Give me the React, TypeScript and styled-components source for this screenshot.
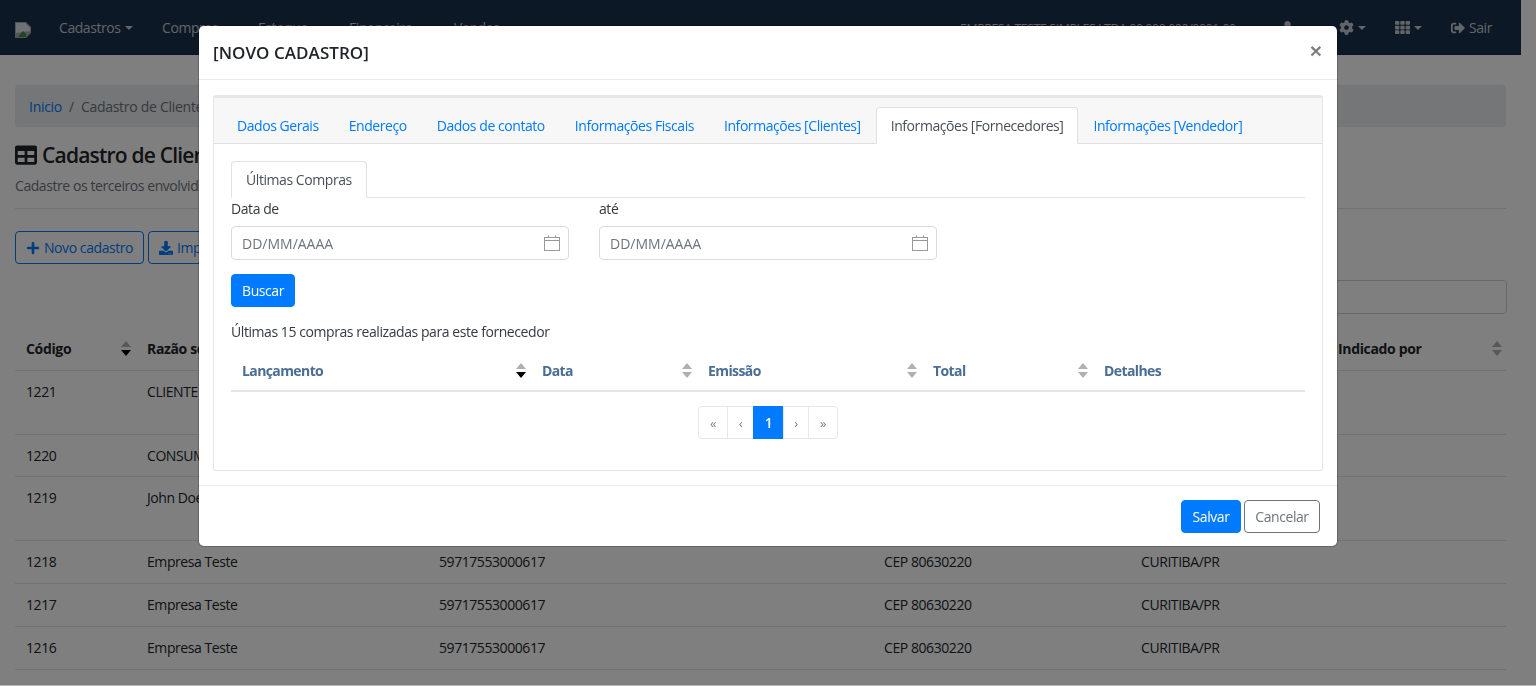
import React from "react";
import styled, { createGlobalStyle } from "styled-components";
import { FaCog, FaDownload, FaPlus, FaSignOutAlt, FaTable, FaTh, FaUser } from "react-icons/fa";

const GlobalStyle = createGlobalStyle`
html, body {
  margin: 0;
  height: 100%;
  overflow: hidden;
  background: #fff;
}
body {
  font-family: "Open Sans", "Liberation Sans", sans-serif;
  font-size: 14px;
  letter-spacing: -0.43px;
  color: #212529;
}
* {
  box-sizing: border-box;
}
`;

const navItems = [
  { label: "Cadastros", width: 103 },
  { label: "Compras", width: 96 },
  { label: "Estoque", width: 91 },
  { label: "Financeiro", width: 105 },
  { label: "Vendas", width: 80 },
];

const mainTabs = [
  { label: "Dados Gerais" },
  { label: "Endereço" },
  { label: "Dados de contato" },
  { label: "Informações Fiscais" },
  { label: "Informações [Clientes]" },
  { label: "Informações [Fornecedores]", active: true },
  { label: "Informações [Vendedor]" },
];

const rows = [
  { code: "1221", name: "CLIENTE", doc: "", cep: "", city: "", height: 64 },
  { code: "1220", name: "CONSUMIDOR", doc: "", cep: "", city: "", height: 42 },
  { code: "1219", name: "John Doe", doc: "", cep: "", city: "", height: 64 },
  { code: "1218", name: "Empresa Teste", doc: "59717553000617", cep: "CEP 80630220", city: "CURITIBA/PR", height: 43 },
  { code: "1217", name: "Empresa Teste", doc: "59717553000617", cep: "CEP 80630220", city: "CURITIBA/PR", height: 43 },
  { code: "1216", name: "Empresa Teste", doc: "59717553000617", cep: "CEP 80630220", city: "CURITIBA/PR", height: 43 },
];

const purchaseColumns = [
  { label: "Lançamento", active: true },
  { label: "Data" },
  { label: "Emissão" },
  { label: "Total" },
  { label: "Detalhes", plain: true },
];

const pages = [
  { label: "«", width: 30 },
  { label: "‹", width: 27 },
  { label: "1", width: 31, active: true },
  { label: "›", width: 26 },
  { label: "»", width: 30 },
];

function SortIcon({ up, down }: { up: string; down: string }) {
  return (
    <svg width="10" height="15" viewBox="0 0 10 15">
      <path d="M5 0 L10 6 H0 Z" fill={up} />
      <path d="M5 15 L0 9 H10 Z" fill={down} />
    </svg>
  );
}

function CalendarIcon() {
  return (
    <svg width="16" height="16" viewBox="0 0 16 16" fill="none" stroke="#999" strokeWidth="1">
      <rect x="0.5" y="2.5" width="15" height="13" />
      <path d="M0.5 5.5 H15.5 M4.5 0.5 V3 M11.5 0.5 V3" />
    </svg>
  );
}

function BrokenImage() {
  return (
    <svg width="16" height="16" viewBox="0 0 16 16">
      <path d="M0 0 H11 L16 5 V11 L11 16 H0 Z" fill="#a3abb3" />
      <path d="M1 1 H10 L15 6 V9 L1 11 Z" fill="#dfe4e8" />
      <path d="M3 15 L8 9 L11 12 L11 15 Z" fill="#3d8a3a" />
    </svg>
  );
}

export default function App() {
  return (
    <>
      <GlobalStyle />
      <Page>
        <Navbar>
          <Logo>
            <BrokenImage />
          </Logo>
          <NavMenu>
            {navItems.map((item) => (
              <NavLink key={item.label} $width={item.width}>
                {item.label}
                <Caret />
              </NavLink>
            ))}
          </NavMenu>
          <NavRight>
            <CompanyName>
              EMPRESA TESTE SIMPLES LTDA 00.000.000/0001-00
              <Caret />
            </CompanyName>
            <NavIcon $width={58}>
              <FaUser size={13} />
              <Caret />
            </NavIcon>
            <NavIcon $width={56}>
              <FaCog size={15} />
              <Caret />
            </NavIcon>
            <NavIcon $width={56}>
              <FaTh size={15} />
              <Caret />
            </NavIcon>
            <SignOut>
              <FaSignOutAlt size={14} />
              Sair
            </SignOut>
          </NavRight>
        </Navbar>
        <Content>
          <Breadcrumb>
            <a href="#">Inicio</a>
            <span>/</span>
            <span>Cadastro de Clientes</span>
          </Breadcrumb>
          <PageTitle>
            <FaTable size={22} />
            Cadastro de Clientes
          </PageTitle>
          <PageSubtitle>Cadastre os terceiros envolvidos</PageSubtitle>
          <Divider />
          <Actions>
            <OutlineButton $width={129}>
              <FaPlus size={14} />
              Novo cadastro
            </OutlineButton>
            <OutlineButton $width={110}>
              <FaDownload size={14} />
              Importar
            </OutlineButton>
          </Actions>
          <SearchRow>
            <SearchInput />
          </SearchRow>
          <RecordsHead>
            <HeadCell>
              Código
              <SortIcon up="#b0b0b0" down="#000" />
            </HeadCell>
            <HeadCell>Razão social</HeadCell>
            <HeadCell />
            <HeadCell />
            <HeadCell />
            <HeadCell>
              Indicado por
              <SortIcon up="#b0b0b0" down="#b0b0b0" />
            </HeadCell>
          </RecordsHead>
          {rows.map((row) => (
            <RecordRow key={row.code} $height={row.height}>
              <span>{row.code}</span>
              <span>{row.name}</span>
              <span>{row.doc}</span>
              <span>{row.cep}</span>
              <span>{row.city}</span>
              <span />
            </RecordRow>
          ))}
        </Content>
      </Page>

      <Backdrop />
      <Modal>
        <ModalHeader>
          <ModalTitle>[NOVO CADASTRO]</ModalTitle>
          <CloseButton>×</CloseButton>
        </ModalHeader>
        <ModalBody>
          <Card>
            <CardTabs>
              {mainTabs.map((tab) => (
                <MainTab key={tab.label} $active={tab.active}>
                  {tab.label}
                </MainTab>
              ))}
            </CardTabs>
            <CardBody>
              <SubTabs>
                <SubTab>Últimas Compras</SubTab>
              </SubTabs>
              <DateRow>
                <DateField>
                  <FieldLabel>Data de</FieldLabel>
                  <DateInput>
                    DD/MM/AAAA
                    <CalendarIcon />
                  </DateInput>
                </DateField>
                <DateField>
                  <FieldLabel>até</FieldLabel>
                  <DateInput>
                    DD/MM/AAAA
                    <CalendarIcon />
                  </DateInput>
                </DateField>
              </DateRow>
              <SearchButton>Buscar</SearchButton>
              <Hint>Últimas 15 compras realizadas para este fornecedor</Hint>
              <PurchasesHead>
                {purchaseColumns.map((col) => (
                  <PurchaseCell key={col.label}>
                    {col.label}
                    {!col.plain && (
                      <SortIcon up="#b0b0b0" down={col.active ? "#000" : "#b0b0b0"} />
                    )}
                  </PurchaseCell>
                ))}
              </PurchasesHead>
              <Pagination>
                {pages.map((page) => (
                  <PageItem key={page.label} $width={page.width} $active={page.active}>
                    {page.label}
                  </PageItem>
                ))}
              </Pagination>
            </CardBody>
          </Card>
        </ModalBody>
        <ModalFooter>
          <PrimaryButton>Salvar</PrimaryButton>
          <CancelButton>Cancelar</CancelButton>
        </ModalFooter>
      </Modal>
    </>
  );
}

const Page = styled.div`
width: 1521px;
`;

const Navbar = styled.nav`
height: 55px;
background: #18304a;
display: flex;
align-items: center;
color: rgba(255, 255, 255, .75);
`;

const Logo = styled.div`
width: 44px;
margin-left: 15px;
padding-top: 5px;
display: flex;
`;

const NavMenu = styled.div`
display: flex;
`;

const NavLink = styled.a<{ $width: number }>`
width: ${(p) => p.$width}px;
display: flex;
align-items: center;
`;

const Caret = styled.i`
display: inline-block;
margin-left: 4px;
border-top: 4px solid currentColor;
border-left: 4px solid transparent;
border-right: 4px solid transparent;
`;

const NavRight = styled.div`
margin-left: auto;
display: flex;
align-items: center;
`;

const CompanyName = styled.span`
width: 321px;
font-size: 12.4px;
white-space: nowrap;
display: flex;
align-items: center;
padding-top: 2px;
`;

const NavIcon = styled.a<{ $width: number }>`
width: ${(p) => p.$width}px;
display: flex;
align-items: center;
`;

const SignOut = styled.a`
width: 70px;
display: flex;
align-items: center;
gap: 4px;
`;

const Content = styled.main`
padding: 30px 15px 0;
`;

const Breadcrumb = styled.div`
height: 42px;
padding: 0 14px;
background: #e9ecef;
border-radius: 4px;
display: flex;
align-items: center;
gap: 7px;
color: #6c757d;
letter-spacing: -0.28px;
a {
  color: #007bff;
  text-decoration: none;
}
`;

const PageTitle = styled.h3`
margin: 13px 0 0;
height: 29px;
display: flex;
align-items: center;
gap: 5px;
font-size: 21px;
font-weight: 600;
letter-spacing: -0.8px;
`;

const PageSubtitle = styled.p`
margin: 7px 0 0;
height: 20px;
color: #6c757d;
`;

const Divider = styled.hr`
margin: 12px 0 0;
border: 0;
border-top: 1px solid rgba(0, 0, 0, .1);
`;

const Actions = styled.div`
margin-top: 22px;
display: flex;
gap: 4px;
`;

const OutlineButton = styled.button<{ $width: number }>`
width: ${(p) => p.$width}px;
height: 33px;
padding: 0 0 0 10px;
display: flex;
align-items: center;
gap: 4px;
background: transparent;
border: 1px solid #007bff;
border-radius: 4px;
color: #007bff;
font: inherit;
letter-spacing: -0.43px;
`;

const SearchRow = styled.div`
margin: 16px -1px 0 0;
display: flex;
justify-content: flex-end;
`;

const SearchInput = styled.div`
width: 400px;
height: 34px;
background: #fff;
border: 1px solid #ced4da;
border-radius: 4px;
`;

const recordColumns = "121px 292px 445px 257px 197px 180px";

const RecordsHead = styled.div`
margin-top: 15px;
height: 42px;
display: grid;
grid-template-columns: ${recordColumns};
border-bottom: 1px solid #dee2e6;
font-weight: 700;
letter-spacing: -0.35px;
`;

const HeadCell = styled.div`
padding: 0 5px 3px 11px;
display: flex;
align-items: center;
justify-content: space-between;
`;

const RecordRow = styled.div<{ $height: number }>`
height: ${(p) => p.$height}px;
padding-top: 11px;
display: grid;
grid-template-columns: ${recordColumns};
border-bottom: 1px solid #dee2e6;
span {
  padding-left: 11px;
}
`;

const Backdrop = styled.div`
position: fixed;
inset: 0;
background: rgba(0, 0, 0, .5);
background-clip: padding-box;
border-bottom: 1px solid rgba(0, 0, 0, .28);
`;

const Modal = styled.section`
position: fixed;
top: 26px;
left: 199px;
width: 1138px;
height: 520px;
display: flex;
flex-direction: column;
background: #fff;
border-radius: 4.8px;
box-shadow: 0 0 0 1px rgba(0, 0, 0, .2);
`;

const ModalHeader = styled.header`
height: 54px;
padding: 0 14px;
display: flex;
align-items: center;
justify-content: space-between;
border-bottom: 1px solid #e9ecef;
`;

const ModalTitle = styled.h5`
margin: 0;
font-size: 17px;
font-weight: 600;
letter-spacing: 0.05px;
`;

const CloseButton = styled.button`
margin: 0 1px 4px 0;
padding: 0;
border: 0;
background: transparent;
font: 700 21px "Liberation Sans", sans-serif;
color: #000;
opacity: .5;
`;

const ModalBody = styled.div`
flex: 1;
padding: 15px 14px 14px;
`;

const Card = styled.div`
height: 376px;
display: flex;
flex-direction: column;
border: 1px solid #e6e6e6;
border-top: 3px solid #e6e6e6;
border-radius: 3px;
`;

const CardTabs = styled.div`
height: 46px;
padding: 9px 8px 0;
display: flex;
background: #f7f7f7;
border-bottom: 1px solid #dfdfdf;
`;

const MainTab = styled.a<{ $active?: boolean }>`
height: 37px;
padding: 0 14px;
display: flex;
align-items: center;
white-space: nowrap;
letter-spacing: -0.44px;
color: ${(p) => (p.$active ? "#495057" : "#007bff")};
background: ${(p) => (p.$active ? "#fff" : "transparent")};
border: 1px solid ${(p) => (p.$active ? "#dee2e6" : "transparent")};
border-bottom-color: ${(p) => (p.$active ? "#fff" : "transparent")};
border-radius: 4px 4px 0 0;
`;

const CardBody = styled.div`
flex: 1;
padding: 17px 17px 0;
`;

const SubTabs = styled.div`
height: 37px;
display: flex;
border-bottom: 1px solid #dee2e6;
`;

const SubTab = styled.a`
height: 37px;
padding: 0 14px;
display: flex;
align-items: center;
color: #495057;
background: #fff;
border: 1px solid #dee2e6;
border-bottom-color: #fff;
border-radius: 4px 4px 0 0;
`;

const DateRow = styled.div`
display: flex;
gap: 30px;
`;

const DateField = styled.div`
width: 338px;
`;

const FieldLabel = styled.label`
display: block;
height: 28px;
padding-top: 1px;
color: #343a40;
`;

const DateInput = styled.div`
height: 34px;
padding: 0 8px 0 10px;
display: flex;
align-items: center;
justify-content: space-between;
color: #6c757d;
letter-spacing: 0;
border: 1px solid #d8dbdf;
border-radius: 4px;
`;

const SearchButton = styled.button`
display: block;
width: 64px;
height: 33px;
margin-top: 14px;
padding: 0;
background: #007bff;
border: 1px solid #007bff;
border-radius: 4px;
color: #fff;
font: inherit;
letter-spacing: inherit;
`;

const Hint = styled.p`
margin: 15px 0 0;
height: 20px;
color: #343a40;
`;

const PurchasesHead = styled.div`
height: 50px;
display: grid;
grid-template-columns: 300px 166px 225px 171px 212px;
border-bottom: 2px solid #e6e6e6;
color: #4a6d94;
font-weight: 700;
letter-spacing: -0.6px;
`;

const PurchaseCell = styled.div`
padding: 8px 5px 0 11px;
display: flex;
align-items: center;
justify-content: space-between;
`;

const Pagination = styled.div`
margin-top: 14px;
display: flex;
justify-content: center;
`;

const PageItem = styled.a<{ $width: number; $active?: boolean }>`
width: ${(p) => p.$width}px;
height: 33px;
display: flex;
align-items: center;
justify-content: center;
font-size: ${(p) => (p.$active ? 14 : 13)}px;
font-weight: ${(p) => (p.$active ? 600 : 400)};
color: ${(p) => (p.$active ? "#fff" : "#8a7f78")};
background: ${(p) => (p.$active ? "#007bff" : "#fff")};
border: 1px solid ${(p) => (p.$active ? "#007bff" : "#e6e8ec")};
margin-left: -1px;
&:first-child {
  margin-left: 0;
  border-radius: 4px 0 0 4px;
}
&:last-child {
  border-radius: 0 4px 4px 0;
}
`;

const ModalFooter = styled.footer`
height: 61px;
padding: 14px 17px 0 0;
display: flex;
justify-content: flex-end;
gap: 3px;
border-top: 1px solid #e9ecef;
`;

const PrimaryButton = styled.button`
width: 60px;
height: 33px;
padding: 0;
background: #007bff;
border: 1px solid #007bff;
border-radius: 4px;
color: #fff;
font: inherit;
letter-spacing: inherit;
`;

const CancelButton = styled.button`
width: 76px;
height: 33px;
padding: 0;
background: #fff;
border: 1px solid #6c757d;
border-radius: 4px;
color: #6c757d;
font: inherit;
letter-spacing: inherit;
`;
